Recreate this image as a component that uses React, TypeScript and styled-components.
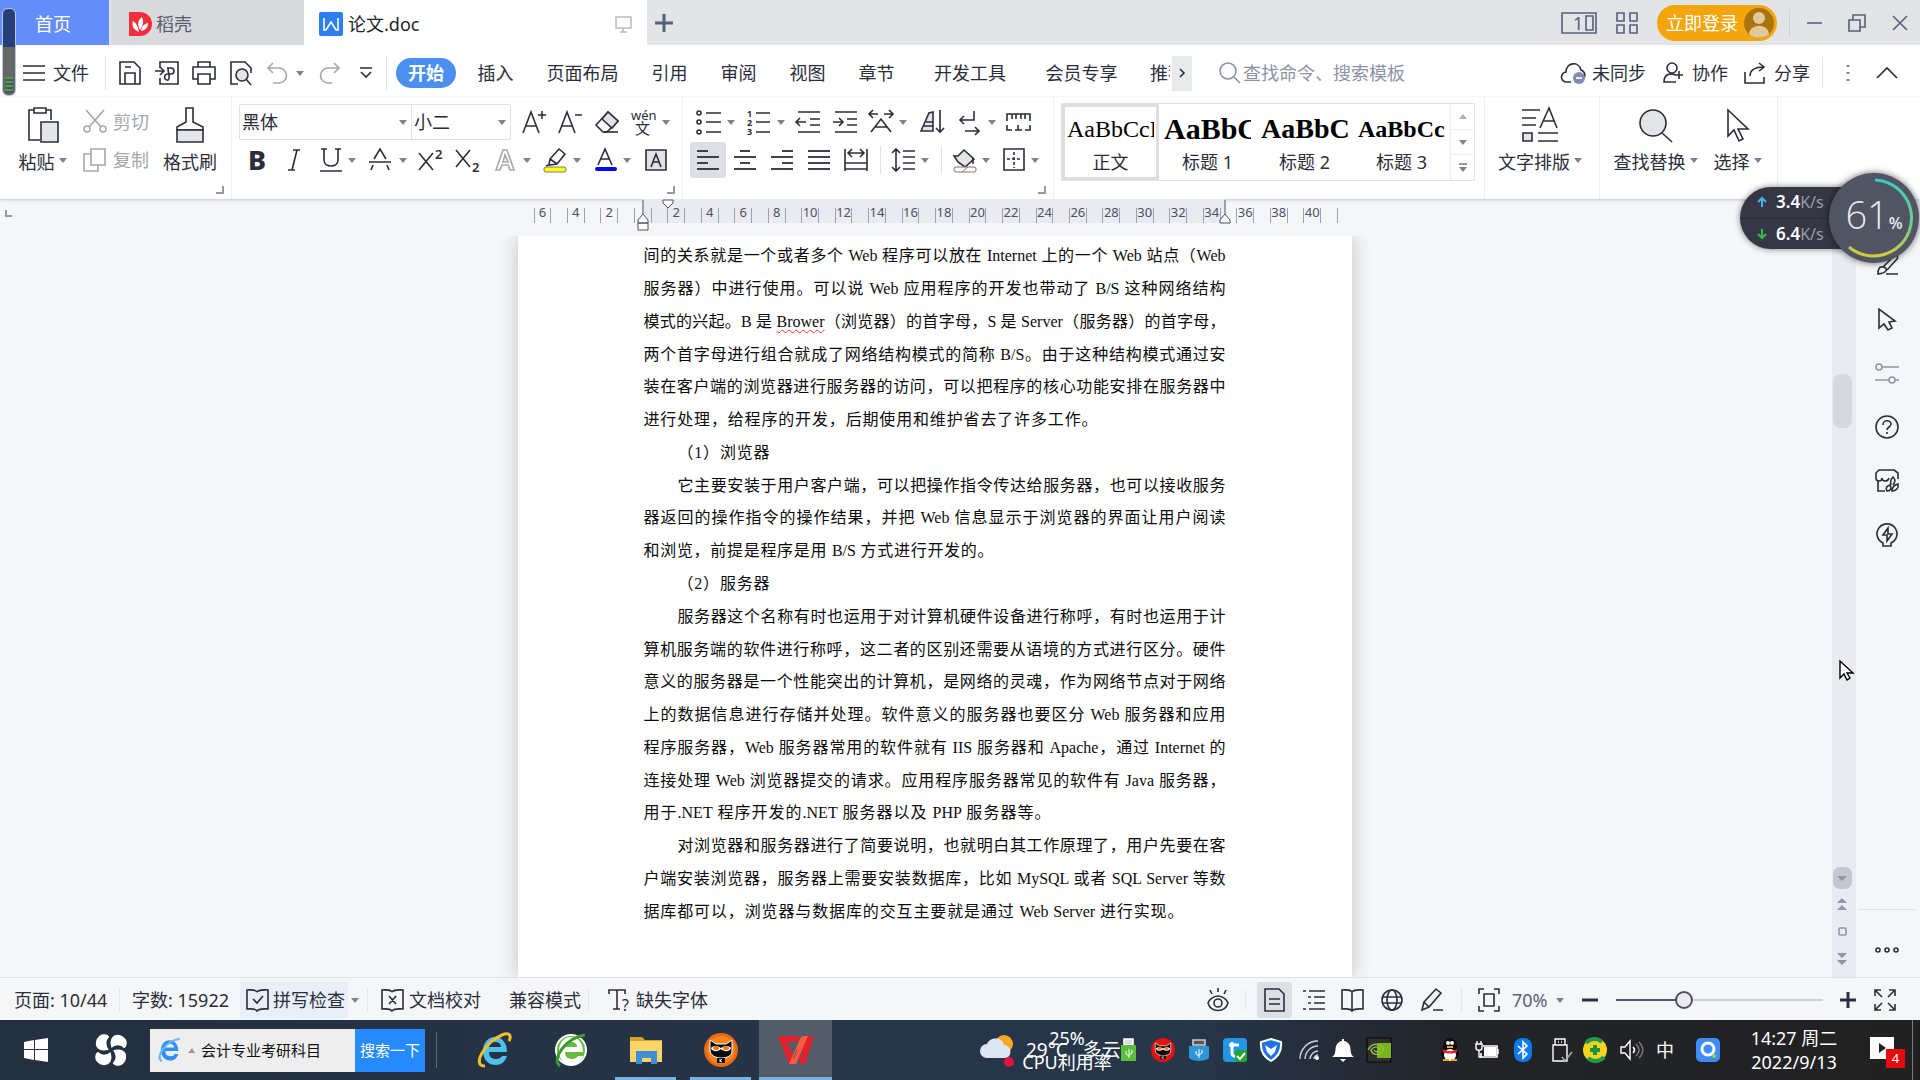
import React from "react";
import styled, { createGlobalStyle, css } from "styled-components";

const ui = `"Noto Sans", "Noto Sans CJK SC", sans-serif`;
const ink = "#2b2e3a";
const muted = "#a4a7ae";

const Global = createGlobalStyle`
  * { box-sizing: border-box; }
  body { margin: 0; background: #f5f6f8; overflow: hidden; }
  button, input, select { font: inherit; color: inherit; border: 0; background: none; padding: 0; margin: 0; outline: 0; }
  h1, p { margin: 0; font: inherit; }
`;

const Shell = styled.div`
  display: flex;
  flex-direction: column;
  height: 100vh;
  font: 18px/24px ${ui};
  color: ${ink};
  white-space: nowrap;
`;

const Svg = styled.svg`
  display: block;
  flex: none;
  fill: none;
  stroke: currentColor;
  stroke-width: 1.6;
  overflow: visible;
  text { fill: currentColor; stroke: none; font-family: ${ui}; }
`;

type IconProps = { w?: number; h?: number; children?: React.ReactNode };
const Icon = ({ w = 24, h = 24, children }: IconProps) => (
  <Svg width={w} height={h} viewBox={`0 0 ${w} ${h}`} aria-hidden="true">{children}</Svg>
);

const CaretShape = styled.svg`
  display: block;
  flex: none;
  fill: #7d8190;
`;
const Caret = () => (
  <CaretShape width="8" height="5" viewBox="0 0 8 5" aria-hidden="true"><path d="M0 0h8L4 5z" /></CaretShape>
);

const Spacer = styled.div`flex: 1;`;
const Gap = styled.span<{ $w: number }>`
  flex: none;
  width: ${(p) => p.$w}px;
`;
const Rule = styled.span<{ $h?: number; $m?: number; $c?: string }>`
  flex: none;
  width: 1px;
  height: ${(p) => p.$h ?? 34}px;
  margin: 0 ${(p) => p.$m ?? 0}px;
  background: ${(p) => p.$c ?? "#e3e5e9"};
`;

/* ---------- title bar ---------- */
const TitleBar = styled.header`
  display: flex;
  flex: none;
  height: 45px;
  background: #e2e4e6;
`;
const DocTab = styled.button<{ $w: number; $bg: string; $c: string; $pad: number }>`
  display: flex;
  align-items: center;
  gap: 5px;
  width: ${(p) => p.$w}px;
  padding: 3px 0 0 ${(p) => p.$pad}px;
  background: ${(p) => p.$bg};
  color: ${(p) => p.$c};
  text-align: left;
`;
const SideTabs = styled.div`display: flex; gap: 2px;`;
const TabRight = styled.span`margin-left: auto; margin-right: 15px; color: #b9bcc4;`;
const TitleButton = styled.button<{ $w: number }>`
  display: flex;
  align-items: center;
  width: ${(p) => p.$w}px;
  color: #54607f;
`;
const Login = styled.button`
  display: flex;
  align-items: center;
  align-self: center;
  gap: 6px;
  width: 120px;
  height: 36px;
  padding-left: 9px;
  margin-right: 12px;
  border-radius: 18px;
  background: #f5a50c;
  color: #fff;
`;

/* ---------- menu row ---------- */
const MenuRow = styled.nav`
  display: flex;
  flex: none;
  align-items: center;
  height: 52px;
  padding: 4px 22px 0 23px;
  background: #fff;
`;
const Tool = styled.button<{ $w: number; $h?: number; $on?: boolean; $gap?: number; $c?: string }>`
  display: flex;
  flex: none;
  align-items: center;
  gap: ${(p) => p.$gap ?? 6}px;
  width: ${(p) => p.$w}px;
  height: ${(p) => p.$h ?? 36}px;
  color: ${(p) => p.$c ?? ink};
  ${(p) => p.$on && css`
    justify-content: center;
    background: #dcdfe6;
    border-radius: 3px;
  `}
`;
const StartTab = styled.button`
  width: 60px;
  height: 30px;
  margin: 0 5px 0 9px;
  border-radius: 15px;
  background: #4b8ff0;
  color: #fff;
  font-weight: 700;
`;
const MenuTab = styled.button<{ $w: number }>`
  flex: none;
  width: ${(p) => p.$w}px;
  overflow: hidden;
`;
const ClippedTab = styled.button`
  flex: none;
  width: 20px;
  margin: 0 2px 0 16px;
  overflow: hidden;
  text-align: left;
`;
const ScrollTabs = styled.button`
  display: grid;
  place-items: center;
  width: 20px;
  height: 35px;
  margin-right: 27px;
  background: #e8eaed;
`;
const Search = styled.label`
  display: flex;
  align-items: center;
  gap: 2px;
  color: #8d93a6;
  input { width: 180px; }
  input::placeholder { color: #8d93a6; opacity: 1; }
`;

/* ---------- ribbon ---------- */
const Ribbon = styled.section`
  display: flex;
  flex: none;
  height: 102px;
  background: #fff;
  box-shadow: 0 1px 3px rgba(0, 0, 0, 0.2);
  position: relative;
`;
const Group = styled.div<{ $w: number; $pad: number }>`
  display: flex;
  flex: none;
  flex-direction: column;
  width: ${(p) => p.$w}px;
  padding: 6px 0 0 ${(p) => p.$pad}px;
  border-right: 1px solid #eeeff2;
`;
const GroupBody = styled.div`
  display: flex;
  flex: none;
  height: 76px;
`;
const ToolRow = styled.div<{ $pad?: number }>`
  display: flex;
  align-items: center;
  flex: none;
  height: 38px;
  padding-left: ${(p) => p.$pad ?? 0}px;
`;
const Corner = styled.span`
  align-self: flex-end;
  width: 8px;
  height: 8px;
  margin: 7px 7px 0 0;
  border: solid #9599a5;
  border-width: 0 2px 2px 0;
`;
const BigTool = styled.button<{ $w: number; $mr?: number }>`
  display: flex;
  flex: none;
  flex-direction: column;
  align-items: center;
  gap: 7px;
  width: ${(p) => p.$w}px;
  margin-right: ${(p) => p.$mr ?? 0}px;
  padding-top: 4px;
`;
const BigLabel = styled.span`display: flex; gap: 4px; align-items: center; svg { margin-bottom: 4px; }`;
const Stack = styled.div<{ $w: number }>`width: ${(p) => p.$w}px;`;

const Combo = styled.div`
  display: flex;
  width: 272px;
  height: 36px;
  margin-right: 11px;
  border: 1px solid #dfe1e6;
  border-radius: 2px;
`;
const Field = styled.label<{ $w: number; $line?: boolean }>`
  display: grid;
  align-items: center;
  width: ${(p) => p.$w}px;
  border-right: ${(p) => (p.$line ? "1px solid #dfe1e6" : "0")};
  > * { grid-area: 1 / 1; }
  select { appearance: none; padding-left: 2px; width: 100%; }
  > svg { justify-self: end; margin-right: 4px; pointer-events: none; }
`;

const Gallery = styled.div`
  display: flex;
  width: 414px;
  height: 78px;
  border: 1px solid #e1e3e7;
`;
const StyleItem = styled.button<{ $on?: boolean }>`
  width: 97px;
  padding: 0 2px;
  border: 3px solid ${(p) => (p.$on ? "#dcdee2" : "transparent")};
`;
const Sample = styled.span<{ $size: number; $bold?: boolean }>`
  display: block;
  height: 38px;
  overflow: hidden;
  text-align: left;
  color: #000;
  font: ${(p) => (p.$bold ? 700 : 400)} ${(p) => p.$size}px/44px "Liberation Serif", serif;
`;
const StyleName = styled.span`display: block; line-height: 34px;`;
const GalleryScroll = styled.div`
  display: flex;
  flex-direction: column;
  flex: 1;
  border-left: 1px solid #eceef0;
  button { flex: 1; display: grid; place-items: center; color: #7d8190; }
  button + button { border-top: 1px solid #eceef0; }
`;

/* ---------- work area ---------- */
const Work = styled.main`
  display: flex;
  flex: 1;
  min-height: 0;
`;
const Editor = styled.div`
  display: flex;
  flex-direction: column;
  flex: 1;
  min-width: 0;
`;
const RulerBar = styled.div`
  display: grid;
  flex: none;
  grid-template-columns: 37px 1fr;
  justify-items: center;
  height: 37px;
`;
const Ruler = styled.div`
  position: relative;
  display: flex;
  width: 834px;
  height: 24px;
  padding: 0 14px 0 16px;
  background: linear-gradient(#e9ebf0, #e9ebf0) 125px 0 / 582px 24px no-repeat;
`;
const Mark = styled.span`
  flex: 1;
  width: 0;
  height: 15px;
  margin-top: 9px;
  border-left: 1px solid #9ea2b0;
  display: flex;
  justify-content: center;
  font: 13px/8px "Noto Sans", sans-serif;
  color: #4c5164;
`;
const LastMark = styled(Mark)`flex: none;`;
const Marker = styled.span<{ $x: number }>`
  position: absolute;
  top: 1px;
  left: ${(p) => p.$x}px;
  color: #4c5164;
`;
const TabStop = styled.button`
  justify-self: start;
  width: 7px;
  height: 7px;
  margin: 11px 0 0 5px;
  border: solid #9599a5;
  border-width: 0 0 2px 2px;
`;
const Canvas = styled.div`
  display: flex;
  flex: 1;
  min-height: 0;
  justify-content: center;
  padding-left: 37px;
  overflow: hidden;
`;
const Page = styled.article`
  display: grid;
  grid-auto-rows: 1fr;
  width: 834px;
  padding: 4px 126px 49px;
  background: #fff;
  box-shadow: 0 0 18px rgba(60, 64, 72, 0.28);
  clip-path: inset(0 -20px);
  color: #0c0c0c;
  font: 16px/32px "Liberation Serif", "Noto Sans CJK SC", serif;
`;
const Paragraph = styled.p`display: contents;`;
const Line = styled.span<{ $indent?: boolean; $end?: number }>`
  display: block;
  align-self: center;
  text-align: justify;
  text-align-last: justify;
  padding-left: ${(p) => (p.$indent ? 34 : 0)}px;
  width: ${(p) => (p.$end ? `${p.$end}px` : "auto")};
`;
const Misspelt = styled.span`
  text-decoration: underline wavy #e03030 1px;
  text-underline-offset: 2px;
`;

const ScrollBar = styled.aside`
  display: flex;
  flex: none;
  flex-direction: column;
  align-items: center;
  gap: 9px;
  width: 24px;
  padding: 175px 4px 12px 0;
  background: #e9ebf0;
  color: #8f96ab;
`;
const Thumb = styled.span`
  width: 19px;
  height: 54px;
  margin-bottom: auto;
  border-radius: 8px;
  background: #d6d8de;
`;
const PageDown = styled.button`
  display: grid;
  place-items: center;
  width: 19px;
  height: 22px;
  border-radius: 7px;
  background: #c3c7cf;
`;
const SideBar = styled.aside`
  display: flex;
  flex: none;
  flex-direction: column;
  align-items: center;
  width: 64px;
  padding: 39px 3px 0 0;
`;
const SideTool = styled.button<{ $c?: string }>`
  display: grid;
  place-items: center;
  width: 40px;
  height: 54px;
  flex: none;
  color: ${(p) => p.$c ?? ink};
`;
const SideMore = styled.button`
  display: grid;
  place-items: center;
  width: 58px;
  height: 68px;
  margin-top: auto;
  padding-top: 12px;
  border-top: 1px solid #dfe1e6;
`;

/* ---------- status bar ---------- */
const StatusBar = styled.footer`
  display: flex;
  flex: none;
  align-items: center;
  height: 43px;
  padding: 2px 23px 0 14px;
  border-top: 1px solid #dfe1e6;
  background: #f5f6f8;
`;
const Status = styled.span<{ $w: number }>`
  display: flex;
  flex: none;
  width: ${(p) => p.$w}px;
`;
const StatusButton = styled.button<{ $w: number; $pad?: number; $tint?: boolean; $gap?: number }>`
  display: flex;
  flex: none;
  align-items: center;
  gap: ${(p) => p.$gap ?? 4}px;
  width: ${(p) => p.$w}px;
  height: 36px;
  padding-left: ${(p) => p.$pad ?? 0}px;
  background: ${(p) => (p.$tint ? "#e8eff9" : "none")};
`;
const Zoom = styled.input`
  appearance: none;
  width: 207px;
  height: 20px;
  margin-right: 17px;
  background: linear-gradient(90deg, #4c5670 33%, #cfd2d8 33%) center / 100% 2px no-repeat;
  &::-webkit-slider-thumb {
    appearance: none;
    width: 18px;
    height: 18px;
    border: 2px solid #4c5164;
    border-radius: 50%;
    background: #ececec;
  }
`;

/* ---------- taskbar ---------- */
const TaskBar = styled.footer`
  display: flex;
  flex: none;
  align-items: center;
  height: 60px;
  background: linear-gradient(90deg, #243040 0%, #27364a 62%, #222429 76%, #212121 100%);
  color: #fff;
`;
const TaskApp = styled.button<{ $w: number; $bar?: boolean; $on?: boolean }>`
  display: grid;
  place-items: center;
  flex: none;
  width: ${(p) => p.$w}px;
  height: 60px;
  background: ${(p) => (p.$on ? "#535d69" : "none")};
  border: solid transparent;
  border-width: 3px 0;
  border-bottom-color: ${(p) => (p.$bar ? "#76b2e6" : "transparent")};
`;
const SearchBox = styled.form`
  display: flex;
  flex: none;
  align-items: center;
  gap: 6px;
  width: 275px;
  height: 43px;
  padding-left: 8px;
  background: #eee;
  color: #111;
  font-size: 15px;
  input { flex: 1; min-width: 0; }
  button { width: 70px; height: 43px; background: #248afd; color: #fff; }
`;
const Tray = styled.span<{ $w: number }>`
  display: flex;
  align-items: center;
  flex: none;
  width: ${(p) => p.$w}px;
`;
const Weather = styled.div`
  position: relative;
  display: flex;
  align-items: center;
  flex: none;
  width: 141px;
  height: 60px;
`;
const Temperature = styled.span`
  position: absolute;
  left: 46px;
  top: 18px;
  font-size: 19px;
  white-space: pre;
`;
const CpuMeter = styled.span`
  position: absolute;
  left: 41px;
  top: 6px;
  width: 92px;
  text-align: center;
  font-size: 18px;
`;
const Clock = styled.time`
  flex: none;
  width: 92px;
  margin-right: 30px;
  text-align: center;
`;
const Notify = styled.button`
  position: relative;
  width: 24px;
  height: 22px;
  margin: 0 18px 4px 0;
  background: #fff;
`;
const Badge = styled.span`
  position: absolute;
  left: 16px;
  top: 12px;
  width: 19px;
  height: 19px;
  background: #e30b0b;
  color: #fff;
  font-size: 13px;
  line-height: 19px;
`;

/* ---------- floating gadgets ---------- */
const NetPanel = styled.aside`
  position: absolute;
  right: 40px;
  top: 187px;
  width: 140px;
  height: 62px;
  border-radius: 31px 0 0 31px;
  background: #353744;
  box-shadow: 0 0 6px rgba(0, 0, 0, 0.5);
  display: flex;
  flex-direction: column;
`;
const Rate = styled.span`
  display: flex;
  align-items: center;
  flex: 1;
  padding-left: 17px;
  color: #fff;
  font-size: 17px;
  b { margin-left: 10px; font-weight: 600; }
  small { font-size: 16px; color: #9a9ca8; }
  & + & { border-top: 1px solid #2a2c37; }
`;
const Dial = styled.div`
  position: absolute;
  right: 1px;
  top: 173px;
  width: 90px;
  height: 90px;
  border-radius: 50%;
  background: #505463;
  box-shadow: 0 0 7px rgba(0, 0, 0, 0.6);
  color: #e8e9ee;
  display: grid;
  > * { grid-area: 1 / 1; }
`;
const DialText = styled.span`
  place-self: center;
  font: 300 38px/44px "Open Sans", "Noto Sans", sans-serif;
  small { font-size: 16px; font-weight: 600; }
`;
const Battery = styled.div`
  position: absolute;
  left: 2px;
  top: 8px;
  width: 14px;
  height: 88px;
  border: 1px solid #b9c6e6;
  border-radius: 6px;
  background: linear-gradient(#263f78 0 38px, #666 38px);
  display: flex;
  align-items: flex-end;
  padding: 2px;
  span {
    flex: 1;
    height: 16px;
    background: repeating-linear-gradient(#46a04c 0 2px, #555 2px 4px);
  }
`;
const Pointer = styled.div`
  position: absolute;
  left: 1839px;
  top: 660px;
`;

const bars = (rows: [number, number][], gap = 7, top = 2) =>
  rows.map(([a, b], i) => <path key={i} d={`M${a} ${top + i * gap}H${b}`} strokeWidth="1.8" />);

const marks = Array.from({ length: 48 }, (_, i) => {
  const value = Math.abs(i - 6);
  return i % 2 === 0 && value !== 0 ? String(value) : "";
});

const PointerPath = "M1 1v17l4-4 3 6 3-2-3-5h6z";

const IeLetter = ({ a, b, ring }: { a: string; b?: string; ring?: string }) => (
  <>
    <path d="M30 20H12c0 5 3 7 7 7 3 0 5-1 6-3h5c-2 6-6 9-11 9C11 33 6 27 6 19S11 5 18 5s12 6 12 15zM12 15h12c0-3-2-5-6-5s-6 2-6 5z" fill={a} stroke="none" />
    {ring && <path d="M8 34C-6 34 8 10 25 3c7-3 10 0 7 6" stroke={ring} strokeWidth="3" />}
    {b && <path d="M7 34C-2 28 12 6 32 3" stroke={b} strokeWidth="3" />}
  </>
);

const Cat = () => (
  <>
    <path d="M6 7l6 4h10l6-4v11c0 5-5 7-11 7S6 22 6 17z" fill="#0b0b0b" stroke="#fff" strokeWidth="1" />
    <path d="M7 15c3-3 7-2 10 0 3-2 7-3 10 0-1 4-7 4-10 1-3 3-9 3-10-1z" fill="#fff" stroke="none" />
    <ellipse cx="12" cy="15" rx="3" ry="2" fill="#f07a1a" stroke="none" />
    <ellipse cx="22" cy="15" rx="3" ry="2" fill="#f07a1a" stroke="none" />
    <path d="M13 25h8v5h-8z" fill="#0b0b0b" stroke="none" />
    <path d="M16 26v3M18 26l-2 2 2 1" stroke="#fff" strokeWidth="1" />
  </>
);

export default function App() {
  return (
    <Shell lang="zh-CN">
      <Global />
      <TitleBar>
        <SideTabs>
          <DocTab $w={109} $bg="#638dfb" $c="#fff" $pad={35}>首页</DocTab>
          <DocTab $w={193} $bg="#d8dade" $c="#5a5e6b" $pad={18}>
            <Icon w={22}>
              <path d="M0 0h11a12 12 0 010 24H0z" fill="#f0313b" stroke="none" />
              <path d="M10 20C3 17 3 12 4 9c3 2 5 5 6 11zM11 18C8 12 9 8 13 5c2 5 1 9-2 13zM12 19c1-5 3-7 7-8 0 4-2 7-7 8z" fill="#fff" stroke="none" />
            </Icon>
            稻壳
          </DocTab>
        </SideTabs>
        <DocTab $w={343} $bg="#fff" $c="#1d1f27" $pad={15}>
          <Icon>
            <rect width="24" height="24" rx="2" fill="#2b7ff0" stroke="none" />
            <path d="M5 6v12h2l5-8 5 8h2V6" stroke="#fff" />
          </Icon>
          论文.doc
          <TabRight><Icon w={17} h={17}><path d="M1 1h15v11H1zM8 12v4M5 16h7" /></Icon></TabRight>
        </DocTab>
        <TitleButton $w={40} aria-label="新建">
          <Icon w={32} h={18}><path d="M8 9h18M17 0v18" strokeWidth="3" /></Icon>
        </TitleButton>
        <Spacer />
        <TitleButton $w={55} aria-label="窗口">
          <Icon w={36} h={22}>
            <path d="M1 1h34v20H1zM25 4h7v14h-7z" /><text x="12" y="18" fontSize="18">1</text>
          </Icon>
        </TitleButton>
        <TitleButton $w={41} aria-label="应用">
          <Icon w={22} h={22}><path d="M1 1h7v8H1zM14 1h7v8h-7zM1 13h7v8H1zM14 13h7v8h-7z" /></Icon>
        </TitleButton>
        <Login>
          立即登录
          <Icon w={30} h={30}>
            <circle cx="15" cy="15" r="15" fill="#a9740e" stroke="none" />
            <circle cx="15" cy="10" r="6" fill="#e2c999" stroke="none" />
            <path d="M5 26c1-11 19-11 20 0-5 5-15 5-20 0z" fill="#e2c999" stroke="none" />
          </Icon>
        </Login>
        <TitleButton $w={59} aria-label="最小化"><Rule $h={28} $c="#cfd2d6" /><Icon w={34} h={16}><path d="M17 8h15" /></Icon></TitleButton>
        <TitleButton $w={44} aria-label="还原"><Icon w={18} h={18}><path d="M1 6h11v11H1zM5 6V1h12v12h-5" /></Icon></TitleButton>
        <TitleButton $w={28} aria-label="关闭"><Icon w={16} h={16}><path d="M1 1l14 14M15 1L1 15" /></Icon></TitleButton>
      </TitleBar>

      <MenuRow>
        <Tool $w={82} $gap={8}><Icon w={22} h={16}><path d="M0 1h22M0 8h22M0 15h22" /></Icon>文件</Tool>
        <Rule /><Gap $w={12} />
        <Tool $w={37} aria-label="保存"><Icon><path d="M2 1h14l6 6v16H2zM7 23V12h10v11M7 6h6" /></Icon></Tool>
        <Tool $w={37} aria-label="输出为PDF"><Icon><path d="M5 7V1h18v22H5v-6M0 10h8M5 6l4 4-4 4M12 7h4a3 3 0 010 6h-3c-5 0-4 7 0 6 3-2 0-6 0-12" /></Icon></Tool>
        <Tool $w={38} aria-label="打印"><Icon><path d="M6 6V1h12v5M6 18H1V6h22v12h-5M6 13h12v10H6z" /></Icon></Tool>
        <Tool $w={37} aria-label="打印预览"><Icon w={22}><path d="M8 23H1V1h14l6 6v5" /><circle cx="12" cy="14" r="6" fill="#e3e5e9" /><path d="M16 18l5 6" /></Icon></Tool>
        <Tool $w={52} $gap={8} $c={muted} aria-label="撤销"><Icon w={21} h={22}><path d="M6 1L1 6l5 5M1 6h11a7 7 0 010 15H6" /></Icon><Caret /></Tool>
        <Tool $w={41} $c={muted} aria-label="恢复"><Icon w={21} h={22}><path d="M15 1l5 5-5 5M20 6H9a7 7 0 000 15h4" /></Icon></Tool>
        <Tool $w={26} aria-label="自定义"><Icon w={12} h={12}><path d="M0 1h12M1 5l5 5 5-5" /></Icon></Tool>
        <Rule />
        <StartTab>开始</StartTab>
        <MenuTab $w={69}>插入</MenuTab>
        <MenuTab $w={105}>页面布局</MenuTab>
        <MenuTab $w={69}>引用</MenuTab>
        <MenuTab $w={69}>审阅</MenuTab>
        <MenuTab $w={69}>视图</MenuTab>
        <MenuTab $w={69}>章节</MenuTab>
        <MenuTab $w={118}>开发工具</MenuTab>
        <MenuTab $w={105}>会员专享</MenuTab>
        <ClippedTab>推荐</ClippedTab>
        <ScrollTabs aria-label="更多选项卡"><Icon w={6} h={10}><path d="M1 1l4 4-4 4" /></Icon></ScrollTabs>
        <Search>
          <Icon w={22} h={22}><circle cx="9" cy="9" r="8" /><path d="M15 15l6 6" /></Icon>
          <input aria-label="查找命令" placeholder="查找命令、搜索模板" />
        </Search>
        <Spacer />
        <Tool $w={102}>
          <Icon w={25} h={22}>
            <path d="M10 20H6a5 5 0 01-1-10C5 0 18-1 20 8c5 2 4 6 3 8" />
            <circle cx="18" cy="16" r="6" fill="#7f8cab" stroke="none" /><path d="M15 16h6" stroke="#fff" />
          </Icon>
          未同步
        </Tool>
        <Tool $w={81} $gap={8}><Icon w={21} h={22}><circle cx="9" cy="6" r="5" /><path d="M13 20H1c0-9 8-9 11-7M16 9v8M12 13h8" /></Icon>协作</Tool>
        <Tool $w={78} $gap={8}><Icon w={22} h={22}><path d="M1 10v11h19v-6M6 14c0-6 4-9 14-9M15 1l5 4-5 4" /></Icon>分享</Tool>
        <Rule $h={30} />
        <Tool $w={53} aria-label="更多"><Icon w={28} h={18}><path d="M25 1v2M25 8v2M25 15v2" strokeWidth="3" stroke="#7d8190" /></Icon></Tool>
        <Tool $w={22} aria-label="收起功能区"><Icon w={22} h={12}><path d="M1 11L11 1l10 10" /></Icon></Tool>
      </MenuRow>

      <Ribbon>
        <Group $w={232} $pad={18}>
          <GroupBody>
            <BigTool $w={49} $mr={16}>
              <Icon w={32} h={36}><path d="M7 3H2v30h11M19 3h5v10M7 1h12v5H7z" /><path d="M14 15h17v20H14z" fill="#e3e5e9" /></Icon>
              <BigLabel>粘贴<Caret /></BigLabel>
            </BigTool>
            <Stack $w={80}>
              <ToolRow><Tool $w={70} $c={muted}><Icon><path d="M3 0l15 17M21 0L6 17" /><circle cx="4" cy="19" r="3" /><circle cx="20" cy="19" r="3" /></Icon>剪切</Tool></ToolRow>
              <ToolRow><Tool $w={70} $c={muted}><Icon><path d="M8 1h14v16H8zM8 6H1v17h14v-6" /></Icon>复制</Tool></ToolRow>
            </Stack>
            <BigTool $w={54}>
              <Icon w={28} h={36}><path d="M10 1h7v14l10 5v3H1v-3l9-5z" /><path d="M1 23h26v12H1z" fill="#e3e5e9" /></Icon>
              <BigLabel>格式刷</BigLabel>
            </BigTool>
          </GroupBody>
          <Corner />
        </Group>

        <Group $w={451} $pad={7}>
          <ToolRow>
            <Combo>
              <Field $w={172} $line><select aria-label="字体"><option>黑体</option></select><Caret /></Field>
              <Field $w={98}><select aria-label="字号"><option>小二</option></select><Caret /></Field>
            </Combo>
            <Tool $w={36} aria-label="增大字号"><Icon><path d="M1 23L9 2l8 21M4 16h10M20 1v8M16 5h8" /></Icon></Tool>
            <Tool $w={37} aria-label="减小字号"><Icon><path d="M1 23L9 2l8 21M4 16h10M17 5h7" /></Icon></Tool>
            <Tool $w={37} aria-label="清除格式"><Icon><path d="M1 15L13 2l10 9-11 11H8z" /><path d="M7 9l6-7 10 9-6 7z" fill="#dfe1e6" /><path d="M9 22h14" /></Icon></Tool>
            <Tool $w={50} aria-label="拼音指南"><Icon><text x="-1" y="10" fontSize="13">wén</text><text x="3" y="24" fontSize="15">文</text></Icon><Caret /></Tool>
          </ToolRow>
          <ToolRow $pad={9}>
            <Tool $w={40} aria-label="加粗"><Icon w={18}><text x="0" y="22" fontSize="27" fontWeight="800">B</text></Icon></Tool>
            <Tool $w={32} aria-label="倾斜"><Icon w={12}><path d="M5 2h7M0 22h7M9 2L4 22" /></Icon></Tool>
            <Tool $w={49} aria-label="下划线"><Icon w={22}><path d="M4 1v11c0 8 14 8 14 0V1M1 1h6M15 1h6M0 23h22" /></Icon><Caret /></Tool>
            <Tool $w={49} aria-label="删除线"><Icon><path d="M5 11l6-10 6 10M0 14h22M4 17l-2 5M18 17l2 5" /></Icon><Caret /></Tool>
            <Tool $w={37} aria-label="上标"><Icon><path d="M1 5l14 17M15 5L1 22" /><text x="17" y="11" fontSize="13" fontWeight="600">2</text></Icon></Tool>
            <Tool $w={40} aria-label="下标"><Icon><path d="M1 2l14 17M15 2L1 19" /><text x="17" y="24" fontSize="13" fontWeight="600">2</text></Icon></Tool>
            <Tool $w={48} $c={muted} aria-label="文字效果"><Icon w={22}><path d="M1 22L8 2h4l7 20h-4l-2-5H7l-2 5zM8 14l2-7 3 7z" /></Icon><Caret /></Tool>
            <Tool $w={52} aria-label="突出显示"><Icon><path d="M6 17l1-6L16 1l6 5-8 10zM7 11l7 5M6 17l-3 1" /><rect x="1" y="19" width="22" height="5" rx="2" fill="#ffff1a" stroke="#77796a" strokeWidth="1" /></Icon><Caret /></Tool>
            <Tool $w={50} aria-label="字体颜色"><Icon w={22}><path d="M3 17L10 1l7 16M6 11h8" /><path d="M2 21h18" stroke="#0808ee" strokeWidth="4" strokeLinecap="round" /></Icon><Caret /></Tool>
            <Tool $w={22} aria-label="字符底纹"><Icon w={22} h={22}><path d="M1 1h20v20H1z" fill="#e0e2e7" /><path d="M6 18l5-13 5 13M8 13h6" /></Icon></Tool>
          </ToolRow>
          <Corner />
        </Group>

        <Group $w={371} $pad={7}>
          <ToolRow $pad={7}>
            <Tool $w={50} aria-label="项目符号"><Icon><path d="M9 3h15M9 12h15M9 22h15" /><circle cx="2" cy="3" r="2" /><circle cx="2" cy="12" r="2" /><circle cx="2" cy="22" r="2" /></Icon><Caret /></Tool>
            <Tool $w={49} aria-label="编号"><Icon><path d="M9 3h14M9 12h14M9 22h14" /><text x="0" y="7" fontSize="9" fontWeight="700">1</text><text x="0" y="16" fontSize="9" fontWeight="700">2</text><text x="0" y="25" fontSize="9" fontWeight="700">3</text></Icon><Caret /></Tool>
            <Tool $w={37} aria-label="减少缩进"><Icon><path d="M2 2h22M14 9h10M14 15h10M2 22h22M0 12h10M4 8l-4 4 4 4" /></Icon></Tool>
            <Tool $w={36} aria-label="增加缩进"><Icon><path d="M2 2h22M14 9h10M14 15h10M2 22h22M0 12h9M6 8l4 4-4 4" /></Icon></Tool>
            <Tool $w={51} aria-label="中文版式"><Icon><path d="M2 22l10-13 10 13M6 17h12M0 4h9M4 0L0 4l4 4M24 4h-9M20 0l4 4-4 4" /></Icon><Caret /></Tool>
            <Tool $w={39} aria-label="排序"><Icon><path d="M1 21L9 3l4-1v19z" fill="#e3e5e9" /><path d="M6 12h7M4 16h9M20 0v22M16 18l4 4 4-4" /></Icon></Tool>
            <Tool $w={47} $gap={8} aria-label="换行"><Icon w={21}><path d="M15 1v9H1M5 6l-4 4 4 4M6 21h14M16 17l4 4-4 4" /></Icon><Caret /></Tool>
            <Tool $w={25} aria-label="制表位"><Icon w={25} h={18}><path d="M1 8V1h23v7M6 1v5M10 1v5M15 1v5M19 1v5M1 12v5h5M12 12v5M9 17h7M24 12v5h-5" /></Icon></Tool>
          </ToolRow>
          <ToolRow>
            <Tool $w={36} $on aria-label="左对齐"><Icon w={22} h={22}>{bars([[0, 11], [0, 22], [0, 11], [0, 22]], 6)}</Icon></Tool>
            <Gap $w={8} />
            <Tool $w={37} aria-label="居中"><Icon w={22} h={22}>{bars([[6, 16], [0, 22], [6, 16], [0, 22]], 6)}</Icon></Tool>
            <Tool $w={37} aria-label="右对齐"><Icon w={22} h={22}>{bars([[11, 22], [0, 22], [11, 22], [0, 22]], 6)}</Icon></Tool>
            <Tool $w={36} aria-label="两端对齐"><Icon w={22} h={22}>{bars([[0, 22], [0, 22], [0, 22], [0, 22]], 6)}</Icon></Tool>
            <Tool $w={36} aria-label="分散对齐"><Icon><path d="M1 1v22M23 1v22M4 5h16M8 1L4 5l4 4M16 1l4 4-4 4M1 15h22M1 21h22" /></Icon></Tool>
            <Rule $h={28} />
            <Tool $w={60} aria-label="行距"><Icon w={34}><path d="M15 1v22M11 5l4-4 4 4M11 19l4 4 4-4M22 3h12M22 9h12M22 15h12M22 21h12" /></Icon><Caret /></Tool>
            <Rule $h={28} />
            <Tool $w={61} aria-label="底纹"><Icon w={34}><path d="M12 8h4l6-6 10 9-9 8-7-5z" fill="#e3e5e9" /><path d="M31 10v6" /><rect x="12" y="19" width="22" height="5" rx="2" fill="#fff" stroke="#777" strokeWidth="1" /><path d="M20 24l6-5" stroke="#e05050" strokeWidth="1" /></Icon><Caret /></Tool>
            <Tool $w={36} aria-label="边框"><Icon w={22}><path d="M1 1h20v21H1z" /><path d="M11 4v16M4 11h15" strokeDasharray="3 2" /></Icon><Caret /></Tool>
          </ToolRow>
          <Corner />
        </Group>

        <Group $w={431} $pad={7}>
          <Gallery>
            <StyleItem $on><Sample $size={24}>AaBbCcDd</Sample><StyleName>正文</StyleName></StyleItem>
            <StyleItem><Sample $size={30} $bold>AaBbCc</Sample><StyleName>标题 1</StyleName></StyleItem>
            <StyleItem><Sample $size={28} $bold>AaBbCc</Sample><StyleName>标题 2</StyleName></StyleItem>
            <StyleItem><Sample $size={24} $bold>AaBbCcDd</Sample><StyleName>标题 3</StyleName></StyleItem>
            <GalleryScroll>
              <button aria-label="上一行"><Icon w={8} h={5}><path d="M0 5h8L4 0z" fill="#a9adb8" stroke="none" /></Icon></button>
              <button aria-label="下一行"><Caret /></button>
              <button aria-label="全部样式"><Icon w={8} h={9}><path d="M0 1h8" /><path d="M0 4h8L4 9z" fill="#7d8190" stroke="none" /></Icon></button>
            </GalleryScroll>
          </Gallery>
        </Group>

        <Group $w={115} $pad={13}>
          <BigTool $w={84}>
            <Icon w={36} h={36}><path d="M0 3h18M0 11h14M0 18h14M18 21l9-20 8 20M21 14h11M16 26h20M16 34h20" /><path d="M1 26h9v8H1z" fill="#e3e5e9" /></Icon>
            <BigLabel>文字排版<Caret /></BigLabel>
          </BigTool>
        </Group>
        <Group $w={178} $pad={13}>
          <GroupBody>
            <BigTool $w={85} $mr={15}>
              <Icon w={34} h={36}><circle cx="14" cy="16" r="13" fill="#e3e5e9" /><path d="M23 26l10 9" /></Icon>
              <BigLabel>查找替换<Caret /></BigLabel>
            </BigTool>
            <BigTool $w={49}>
              <Icon w={22} h={36}><path d="M1 3v26l6-6 5 11 4-2-5-10h10z" /></Icon>
              <BigLabel>选择<Caret /></BigLabel>
            </BigTool>
          </GroupBody>
        </Group>
      </Ribbon>

      <Work>
        <Editor>
          <RulerBar>
            <TabStop aria-label="制表符" />
            <Ruler>
              {marks.map((m, i) => <Mark key={i}>{m}</Mark>)}
              <LastMark />
              <Marker $x={119}><Icon w={12} h={30}><path d="M6 0v14M1 20l5-6 5 6v3H1zM1 23h10v7H1z" fill="#fff" strokeWidth="1" /></Icon></Marker>
              <Marker $x={144}><Icon w={12} h={8}><path d="M1 0h10v3L6 8 1 3z" fill="#fff" strokeWidth="1" /></Icon></Marker>
              <Marker $x={701}><Icon w={12} h={24}><path d="M6 0v14M1 20l5-6 5 6v3H1z" fill="#fff" strokeWidth="1" /></Icon></Marker>
            </Ruler>
          </RulerBar>
          <Canvas>
            <Page>
              <Paragraph>
                <Line>间的关系就是一个或者多个 Web 程序可以放在 Internet 上的一个 Web 站点（Web</Line>
                <Line>服务器）中进行使用。可以说 Web 应用程序的开发也带动了 B/S 这种网络结构</Line>
                <Line>模式的兴起。B 是 <Misspelt>Brower</Misspelt>（浏览器）的首字母，S 是 Server（服务器）的首字母，</Line>
                <Line>两个首字母进行组合就成了网络结构模式的简称 B/S。由于这种结构模式通过安</Line>
                <Line>装在客户端的浏览器进行服务器的访问，可以把程序的核心功能安排在服务器中</Line>
                <Line $end={454}>进行处理，给程序的开发，后期使用和维护省去了许多工作。</Line>
              </Paragraph>
              <Paragraph><Line $indent $end={126}>（1）浏览器</Line></Paragraph>
              <Paragraph>
                <Line $indent>它主要安装于用户客户端，可以把操作指令传达给服务器，也可以接收服务</Line>
                <Line>器返回的操作指令的操作结果，并把 Web 信息显示于浏览器的界面让用户阅读</Line>
                <Line $end={350}>和浏览，前提是程序是用 B/S 方式进行开发的。</Line>
              </Paragraph>
              <Paragraph><Line $indent $end={126}>（2）服务器</Line></Paragraph>
              <Paragraph>
                <Line $indent>服务器这个名称有时也运用于对计算机硬件设备进行称呼，有时也运用于计</Line>
                <Line>算机服务端的软件进行称呼，这二者的区别还需要从语境的方式进行区分。硬件</Line>
                <Line>意义的服务器是一个性能突出的计算机，是网络的灵魂，作为网络节点对于网络</Line>
                <Line>上的数据信息进行存储并处理。软件意义的服务器也要区分 Web 服务器和应用</Line>
                <Line>程序服务器，Web 服务器常用的软件就有 IIS 服务器和 Apache，通过 Internet 的</Line>
                <Line>连接处理 Web 浏览器提交的请求。应用程序服务器常见的软件有 Java 服务器，</Line>
                <Line $end={407}>用于.NET 程序开发的.NET 服务器以及 PHP 服务器等。</Line>
              </Paragraph>
              <Paragraph>
                <Line $indent>对浏览器和服务器进行了简要说明，也就明白其工作原理了，用户先要在客</Line>
                <Line>户端安装浏览器，服务器上需要安装数据库，比如 MySQL 或者 SQL Server 等数</Line>
                <Line $end={540}>据库都可以，浏览器与数据库的交互主要就是通过 Web Server 进行实现。</Line>
              </Paragraph>
            </Page>
          </Canvas>
        </Editor>
        <ScrollBar>
          <Thumb />
          <PageDown aria-label="向下滚动"><Icon w={10} h={5}><path d="M0 0h10L5 5z" fill="currentColor" stroke="none" /></Icon></PageDown>
          <Icon w={10} h={12}><path d="M0 5h10L5 0zM0 12h10L5 7z" fill="currentColor" stroke="none" /></Icon>
          <Icon w={9} h={25}><rect x="1" y="9" width="7" height="7" rx="1" /></Icon>
          <Icon w={10} h={12}><path d="M0 0h10L5 5zM0 7h10l-5 5z" fill="currentColor" stroke="none" /></Icon>
        </ScrollBar>
        <SideBar>
          <SideTool aria-label="样式"><Icon w={22} h={20}><path d="M7 12L17 2c3-3 6 0 4 2L11 15M2 19c0-4 1-8 5-7 5 1 5 6-5 7zM10 19h12" /></Icon></SideTool>
          <SideTool aria-label="选择"><Icon w={18} h={22}><path d="M1 1v19l5-4 4 6 4-2-3-6 6-1z" /></Icon></SideTool>
          <SideTool $c="#9096a8" aria-label="属性"><Icon w={24} h={20}><circle cx="4" cy="4" r="3" /><path d="M7 4h17M0 17h14M20 17h4" /><circle cx="17" cy="17" r="3" /></Icon></SideTool>
          <SideTool aria-label="帮助"><Icon><circle cx="12" cy="12" r="11" /><path d="M8 10c0-6 8-5 8-1 0 3-4 3-4 6M12 17v2" /></Icon></SideTool>
          <SideTool aria-label="稻壳资源"><Icon><path d="M3 11v11h7M1 9V4l3-3h15l4 3v6M1 9c0 4 6 4 6 0 0 4 6 4 7 0M12 22c-2-3 0-5 3-6 2 3 1 6-3 6zM16 16c-1-4 0-6 2-8 3 3 2 5 0 8M17 22c0-4 2-6 6-7 1 4-2 7-6 7z" /></Icon></SideTool>
          <SideTool aria-label="智能工具"><Icon w={22}><path d="M7 23v-3a10 10 0 118 0v3zM12 5l-5 7h4v6l5-7h-4z" /></Icon></SideTool>
          <SideMore aria-label="更多工具"><Icon w={24} h={8}><circle cx="3" cy="4" r="2" /><circle cx="12" cy="4" r="2" /><circle cx="21" cy="4" r="2" /></Icon></SideMore>
        </SideBar>
      </Work>

      <StatusBar>
        <Status $w={105}>页面: 10/44</Status><Rule $h={24} />
        <StatusButton $w={120} $pad={12}>字数: 15922</StatusButton>
        <StatusButton $w={108} $pad={6} $tint>
          <Icon w={23}><path d="M11 4C9 1 5 2 1 2v19c4 0 8-1 10 2 3-3 7-2 11-2V2c-4 0-8-1-11 2M7 11l4 4 6-7" /></Icon>拼写检查
        </StatusButton>
        <StatusButton $w={19} $pad={3} aria-label="拼写检查选项"><Caret /></StatusButton><Rule $h={24} />
        <StatusButton $w={141} $pad={13} $gap={5}>
          <Icon w={23}><path d="M11 4C9 1 5 2 1 2v19c4 0 8-1 10 2 3-3 7-2 11-2V2c-4 0-8-1-11 2M8 8l7 8M15 8l-7 8" /></Icon>文档校对
        </StatusButton>
        <StatusButton $w={79}>兼容模式</StatusButton><Rule $h={24} />
        <StatusButton $w={130} $pad={19} $gap={5}>
          <Icon w={23}><path d="M1 6V2h16v4M9 2v19M5 21h7" /><text x="14" y="23" fontSize="16">?</text></Icon>缺失字体
        </StatusButton>
        <Spacer />
        <StatusButton $w={39} aria-label="护眼模式"><Icon><path d="M12 8c-5 0-9 4-10 7 3 10 17 10 20 0-1-3-5-7-10-7zM12 0v4M4 2l2 4M20 2l-2 4" /><circle cx="12" cy="15" r="4" /></Icon></StatusButton>
        <Rule $h={20} /><Gap $w={11} />
        <Tool $w={35} $on aria-label="页面视图"><Icon w={21}><path d="M1 1h14l5 5v17H1zM5 11h11M5 16h11" /></Icon></Tool>
        <Gap $w={11} />
        <Tool $w={38} aria-label="大纲"><Icon w={22}><path d="M0 3h3M6 3h16M5 9h3M11 9h11M5 15h3M11 15h11M0 21h3M6 21h16" /></Icon></Tool>
        <Tool $w={39} aria-label="阅读版式"><Icon w={23}><path d="M11 4C9 1 5 2 1 2v19c4 0 8-1 10 2 3-3 7-2 11-2V2c-4 0-8-1-11 2zV23" /></Icon></Tool>
        <Tool $w={40} aria-label="Web版式"><Icon w={23}><circle cx="12" cy="12" r="10" /><ellipse cx="12" cy="12" rx="5" ry="10" /><path d="M2 9h20M2 15h20" /></Icon></Tool>
        <Tool $w={41} aria-label="写作模式"><Icon w={23}><path d="M2 22l2-8L16 1l5 4L9 19zM4 14l5 5M13 22h10" /></Icon></Tool>
        <Rule $h={24} /><Gap $w={16} />
        <Tool $w={34} aria-label="最佳显示比例"><Icon w={22}><path d="M1 6V1h5M16 1h5v5M21 18v5h-5M6 23H1v-5M6 6h10v12H6z" /></Icon></Tool>
        <Tool $w={70} $gap={8} $c="#5b6078">70%<Caret /></Tool>
        <Tool $w={34} aria-label="缩小"><Icon w={16} h={16}><path d="M0 8h16" strokeWidth="3" /></Icon></Tool>
        <Zoom type="range" aria-label="显示比例" min={0} max={100} defaultValue={31} />
        <Tool $w={34} aria-label="放大"><Icon w={16} h={16}><path d="M0 8h16M8 0v16" strokeWidth="3" /></Icon></Tool>
        <Tool $w={23} aria-label="全屏"><Icon w={22} h={22}><path d="M1 7V1h6M1 1l7 7M15 1h6v6M21 1l-7 7M1 15v6h6M1 21l7-7M21 15v6h-6M21 21l-7-7" /></Icon></Tool>
      </StatusBar>

      <TaskBar>
        <TaskApp $w={72} aria-label="开始"><Icon><path d="M0 4l10-2v9H0zM11 2l13-2v11H11zM0 12h10v10L0 20zM11 12h13v12l-13-2z" fill="#fff" stroke="none" /></Icon></TaskApp>
        <TaskApp $w={78} aria-label="小智">
          <Icon w={32} h={32}>
            <g fill="#fff" stroke="#25313f" strokeWidth="1.5">
              <path d="M15 16C3 20-2 13 1 5 6-4 14 0 15 3c-4 4-4 8 0 13z" />
              <path d="M16 15C12 3 19-2 27 1c9 5 5 13 2 14-4-4-8-4-13 0z" />
              <path d="M17 16c12-4 17 3 14 11-5 9-13 5-14 2 4-4 4-8 0-13z" />
              <path d="M16 17c4 12-3 17-11 14-9-5-5-13-2-14 4 4 8 4 13 0z" />
            </g>
          </Icon>
        </TaskApp>
        <SearchBox onSubmit={(e) => e.preventDefault()}>
          <Svg width="24" height="24" viewBox="2 2 33 33"><IeLetter a="#2f8ff2" b="#6fb6f7" /></Svg>
          <Icon w={7} h={5}><path d="M0 5h7L4 0z" fill="#999" stroke="none" /></Icon>
          <input aria-label="搜索" defaultValue="会计专业考研科目" />
          <button type="submit">搜索一下</button>
        </SearchBox>
        <Rule $h={36} $m={11} $c="#5f6873" /><Gap $w={9} />
        <TaskApp $w={76} aria-label="Internet Explorer"><Icon w={36} h={36}><IeLetter a="#4fc0ee" ring="#f2c029" /></Icon></TaskApp>
        <TaskApp $w={76} aria-label="浏览器"><Icon w={36} h={36}><circle cx="18" cy="18" r="16" fill="#fff" stroke="none" /><circle cx="18" cy="18" r="14" fill="#69bb3f" stroke="none" /><IeLetter a="#fff" b="#3c9a2a" /></Icon></TaskApp>
        <Gap $w={6} />
        <TaskApp $w={61} $bar aria-label="文件资源管理器">
          <Icon w={32} h={28}><path d="M0 4V1h12l3 3h17v22H0z" fill="#d9a32b" stroke="none" /><path d="M0 5h32v21H0z" fill="#fbd567" stroke="none" /><path d="M6 28V15h21v13h-6v-6h-9v6z" fill="#3f8fd6" stroke="none" /></Icon>
        </TaskApp>
        <Gap $w={14} />
        <TaskApp $w={61} $bar aria-label="录屏"><Icon w={34} h={34}><circle cx="17" cy="17" r="17" fill="#e8690f" stroke="none" /><circle cx="17" cy="17" r="14" fill="#f3861f" stroke="none" /><Cat /></Icon></TaskApp>
        <Gap $w={8} />
        <TaskApp $w={73} $bar $on aria-label="WPS">
          <Icon w={36} h={28}>
            <path d="M0 0h22l-3 6H9l6 13-4 9z" fill="#e5202a" stroke="none" />
            <path d="M27 28h-4l-3-7 8-15 2-6h6z" fill="#e5202a" stroke="none" />
            <path d="M11 28L22 3c1-2 2-3 4-3h4L18 28z" fill="#ff5a3c" stroke="none" />
            <path d="M19 14l-4 9M25 14l-3 8" stroke="#535d69" strokeWidth="1" />
          </Icon>
        </TaskApp>
        <Spacer />
        <Weather>
          <Icon w={34} h={36}>
            <circle cx="24" cy="12" r="9" fill="#f7a823" stroke="none" />
            <path d="M7 26a7 7 0 010-14c3-8 16-7 17 1 9 1 8 13 1 13z" fill="#dde6f2" stroke="none" />
            <circle cx="29" cy="30" r="5" fill="#e0143c" stroke="none" />
          </Icon>
          <Temperature>29°C   多云</Temperature>
          <CpuMeter>25%<br />CPU利用率</CpuMeter>
        </Weather>
        <Tray $w={30}><Icon w={16} h={24}><path d="M3 1h9v6H3z" fill="#ddd" /><path d="M0 7h15v16H0z" fill="#5cbc3e" stroke="none" /><path d="M8 20v-9M5 13v3l3 2M11 12v3l-3 2" stroke="#fff" strokeWidth="1" /></Icon></Tray>
        <Tray $w={38}><Svg width="24" height="24" viewBox="0 0 34 34"><circle cx="17" cy="17" r="17" fill="#e3120e" stroke="none" /><Cat /></Svg></Tray>
        <Tray $w={34}><Icon w={20}><path d="M4 2h12v5H4z" fill="#555" stroke="#ccc" /><path d="M0 8h20v12c-4 4-16 4-20 0z" fill="#2d95d8" stroke="none" /><path d="M10 20v-9M7 13v3l3 2M13 12v3l-3 2" stroke="#fff" strokeWidth="1" /></Icon></Tray>
        <Tray $w={36}><Icon><rect width="24" height="24" rx="4" fill="#2395e6" stroke="none" /><path d="M6 7h10M9 4v11c0 3 3 4 5 3" stroke="#fff" strokeWidth="3" /><rect x="12" y="12" width="12" height="12" rx="3" fill="#22a52c" stroke="none" /><path d="M14 18l3 3 5-6" stroke="#fff" strokeWidth="2" /></Icon></Tray>
        <Tray $w={40}><Icon><path d="M12 1l10 3c1 9-3 15-10 19C5 19 1 13 2 4z" fill="#2273ea" stroke="#fff" strokeWidth="2" /><path d="M6 7l6 4 6-4-2 7-4 4-4-4z" fill="#fff" stroke="none" /></Icon></Tray>
        <Tray $w={33}><Icon w={20} h={20}><path d="M1 19C1 9 9 1 19 1M6 19C6 12 12 6 19 6M11 19c0-4 4-8 8-8M15 19c0-2 2-4 4-4" strokeWidth="1.4" stroke="#cfd5dc" /><circle cx="18" cy="18" r="2" fill="#fff" stroke="none" /></Icon></Tray>
        <Tray $w={35}><Icon w={22}><path d="M0 19c4-2 3-7 4-11 1-3 4-5 6-5V1h2v2c2 0 5 2 6 5 1 4 0 9 4 11zM8 21h6l-3 3z" fill="#fff" stroke="none" /></Icon></Tray>
        <Tray $w={73}><Icon><path d="M0 0h24v24H0z" fill="#2f302e" stroke="#111" /><path d="M10 5h14v15H10z" fill="#78b51b" stroke="none" /><path d="M1 12c4-8 12-7 16-1-4 8-12 6-13 1 3-4 7-4 9-1-2 4-5 3-6 1" stroke="#8cc63f" strokeWidth="1.4" /></Icon></Tray>
        <Tray $w={35}><Icon w={20}><ellipse cx="10" cy="9" rx="7" ry="9" fill="#0a0a0a" stroke="none" /><ellipse cx="10" cy="16" rx="9" ry="7" fill="#0a0a0a" stroke="none" /><ellipse cx="10" cy="17" rx="6" ry="6" fill="#fff" stroke="none" /><path d="M3 11c4 3 10 3 14 0v3c-4 2-10 2-14 0z" fill="#e0232c" stroke="none" /><circle cx="8" cy="5" r="2" fill="#fff" stroke="none" /><circle cx="12" cy="5" r="2" fill="#fff" stroke="none" /><path d="M3 22h6M11 22h6M7 9h6" stroke="#f5a614" strokeWidth="2" /></Icon></Tray>
        <Tray $w={39}><Icon w={24} h={18}><path d="M8 5h14v11H6v-4" /><path d="M9 6h12v9H9z" fill="#fff" stroke="none" /><path d="M23 8v5M1 3h6v4c0 3-6 3-6 0zM2 0v3M6 0v3M4 10v6h3" strokeWidth="1.4" /></Icon></Tray>
        <Tray $w={38}><Icon w={18}><rect width="18" height="24" rx="8" fill="#0a7bea" stroke="none" /><path d="M4 8l9 8-4 4V4l4 4-9 8" stroke="#fff" /></Icon></Tray>
        <Tray $w={31}><Icon w={20}><path d="M3 1h10v6H3zM1 7h14v16H1zM6 4h1M9 4h1" strokeWidth="1.4" /><path d="M10 19l3 4 7-9" stroke="#aaa" /></Icon></Tray>
        <Tray $w={38}><Icon><circle cx="12" cy="12" r="12" fill="#f7d31d" stroke="none" /><path d="M3 5a11 11 0 0116-1M21 19A11 11 0 015 20" stroke="#219a4a" strokeWidth="4" /><path d="M12 7v10M7 12h10" stroke="#13923d" strokeWidth="4" /></Icon></Tray>
        <Tray $w={35}><Icon w={22} h={20}><path d="M0 7h4l5-6v18l-5-6H0z" strokeWidth="1.4" /><path d="M12 7c2 2 2 4 0 6" /><path d="M15 4c4 4 4 8 0 12M18 2c5 5 5 11 0 16" stroke="#777" /></Icon></Tray>
        <Tray $w={40}>中</Tray>
        <Tray $w={52}><Icon><rect width="24" height="24" rx="5" fill="#3e8cf5" stroke="none" /><circle cx="12" cy="11" r="6" stroke="#fff" strokeWidth="3" /><circle cx="18" cy="18" r="2" fill="#7ee04c" stroke="none" /></Icon></Tray>
        <Clock>14:27 周二<br />2022/9/13</Clock>
        <Notify aria-label="通知"><Icon w={24} h={22}><path d="M9 6l7 5-7 5z" fill="#222" stroke="none" /></Icon><Badge>4</Badge></Notify>
        <Rule $h={60} $c="#7b7b7b" /><Gap $w={7} />
      </TaskBar>

      <NetPanel>
        <Rate><Icon w={9} h={10}><path d="M5 10V1M1 5l4-4 4 4" stroke="#40b4f0" strokeWidth="2" /></Icon><b>3.4</b><small>K/s</small></Rate>
        <Rate><Icon w={9} h={10}><path d="M5 0v9M1 5l4 4 4-4" stroke="#2fbf4b" strokeWidth="2" /></Icon><b>6.4</b><small>K/s</small></Rate>
      </NetPanel>
      <Dial>
        <Icon w={90} h={90}>
          <defs><linearGradient id="load" x1="0" y1="0" x2="0" y2="1"><stop offset="0" stopColor="#3fc9c0" /><stop offset="0.6" stopColor="#6fd08a" /><stop offset="1" stopColor="#d8c93c" /></linearGradient></defs>
          <path d="M46 7a38 38 0 11-26 67" stroke="url(#load)" strokeWidth="3" />
        </Icon>
        <DialText>61<small>%</small></DialText>
      </Dial>
      <Battery><span /></Battery>
      <Pointer><Icon w={14} h={20}><path d={PointerPath} fill="#fff" stroke="#000" strokeWidth="1.4" /></Icon></Pointer>
    </Shell>
  );
}
